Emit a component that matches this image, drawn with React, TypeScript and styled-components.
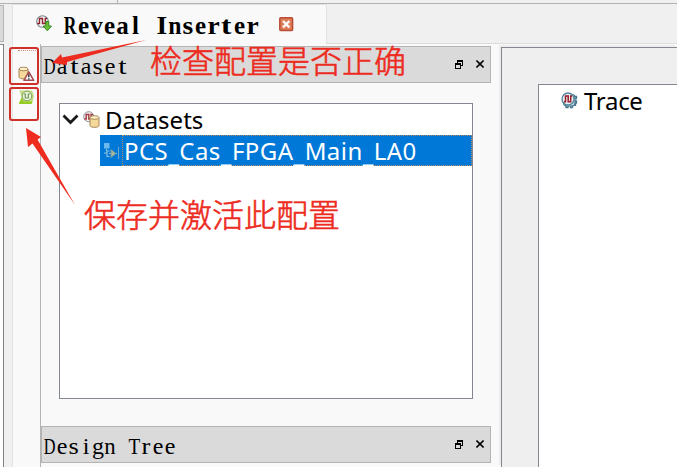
import React from "react";
import styled, { createGlobalStyle } from "styled-components";

const GlobalStyle = createGlobalStyle`
  * { box-sizing: border-box; }
  body { margin: 0; overflow: hidden; background: #f0f0f0; }
`;

const Window = styled.div`
  position: relative;
  width: 677px;
  height: 467px;
  overflow: hidden;
  display: flex;
  flex-direction: column;
  background: #f0f0f0;
  color: #000;
  font-family: "Noto Sans", "Open Sans", sans-serif;
`;

const TopStrip = styled.div`
  height: 4px;
  flex: none;
  border-bottom: 1px solid #b2b2b2;
  display: flex;
`;

const TopStripCell = styled.div`
  width: 118px;
  border-right: 1px solid #b2b2b2;
`;

const Body = styled.div`
  flex: 1;
  display: flex;
  min-height: 0;
`;

const LeftEdge = styled.div`
  width: 12px;
  flex: none;
  display: flex;
  flex-direction: column;
  gap: 2px;
`;

const EdgeTab = styled.div`
  width: 4px;
  height: 37px;
  margin-top: 1px;
  background: #dadada;
  border: 1px solid #b4b4b4;
  border-left: 0;
`;

const EdgePanel = styled.div`
  width: 4px;
  flex: 1;
  background: #fff;
  border-top: 1px solid #828790;
  border-right: 1px solid #828282;
`;

const Workspace = styled.div`
  flex: 1;
  display: flex;
  flex-direction: column;
  min-width: 0;
`;

const TabBar = styled.div`
  height: 40px;
  flex: none;
  display: flex;
  border-bottom: 1px solid #dcdcdc;
`;

const Tab = styled.div`
  width: 315px;
  height: 40px;
  display: flex;
  align-items: flex-start;
  background: #f9f9f9;
  border: 1px solid #e2e2e2;
  border-bottom: 0;
  padding: 10px 0 0 23px;
`;

const TabTitle = styled.div`
  width: 196px;
  margin-left: 10px;
  margin-top: -4px;
`;

const TabClose = styled.div`
  margin: 1px 0 0 18px;
  line-height: 0;
`;

const FixedText = styled.span<{ $size: number; $cell: number; $bold?: boolean }>`
  display: inline-flex;
  white-space: pre;
  font-family: "Liberation Serif", serif;
  font-size: ${(p) => p.$size}px;
  font-weight: ${(p) => (p.$bold ? 700 : 400)};
  line-height: 30px;
`;

const Cell = styled.span<{ $width: number }>`
  width: ${(p) => p.$width}px;
  display: flex;
  justify-content: center;
`;

const Glyph = styled.span<{ $scale: number }>`
  transform: scaleX(${(p) => p.$scale});
`;

const Panes = styled.div`
  flex: 1;
  display: flex;
  min-height: 0;
  background: #f9f9f9;
`;

const ToolBar = styled.div`
  width: 29px;
  flex: none;
  border-left: 1px solid #e4e4e4;
  border-right: 1px solid #b4b4b4;
  display: flex;
  flex-direction: column;
  align-items: flex-start;
  padding: 6px 0 0 5px;
`;

const Grip = styled.div`
  width: 20px;
  border-top: 1px dotted #d98a86;
`;

const ToolIcon = styled.div<{ $top: number }>`
  margin-top: ${(p) => p.$top}px;
  line-height: 0;
`;

const Docks = styled.div`
  width: 450px;
  flex: none;
  display: flex;
  flex-direction: column;
  padding-top: 2px;
`;

const DockHeader = styled.div`
  height: 37px;
  flex: none;
  display: flex;
  align-items: center;
  background: #dadada;
  border: 1px solid #b4b4b4;
  padding: 3px 6px 0 2px;
`;

const DockButtons = styled.div`
  margin-left: auto;
  margin-top: -3px;
  display: flex;
  gap: 13px;
  line-height: 0;
`;

const TreeBox = styled.div`
  width: 414px;
  height: 296px;
  flex: none;
  margin: 20px 0 27px 18px;
  background: #fff;
  border: 1px solid #828790;
`;

const TreeRow = styled.div`
  height: 31px;
  display: flex;
  align-items: center;
  padding-left: 2px;
`;

const IconSlot = styled.div<{ $left: number }>`
  margin-left: ${(p) => p.$left}px;
  line-height: 0;
`;

const SelectedRow = styled.div`
  height: 31px;
  margin-left: 40px;
  display: flex;
  align-items: center;
  background: #0078d7;
  color: #fff;
`;

const SelectedLabel = styled.div`
  flex: 1;
  height: 31px;
  margin-left: 2px;
  padding-left: 1px;
  display: flex;
  align-items: center;
  border: 1px dotted #b98a5e;
`;

const Label = styled.span<{ $gap?: number; $spacing?: number }>`
  font-size: 24px;
  line-height: 30px;
  white-space: nowrap;
  margin-left: ${(p) => p.$gap ?? 0}px;
  letter-spacing: ${(p) => p.$spacing ?? 0}px;
`;

const Underscore = styled.span`
  line-height: 0;
  vertical-align: -2px;
`;

const TracePane = styled.div`
  flex: 1;
  margin: 3px 0 0 10px;
  background: #efefef;
  border-left: 1px solid #828790;
  border-top: 1px solid #828790;
  box-shadow: -2px -2px 0 #ededed;
  padding: 36px 0 0 36px;
  display: flex;
`;

const TraceList = styled.div`
  flex: 1;
  background: #fff;
  border-left: 1px solid #828790;
  border-top: 1px solid #828790;
  padding: 0 0 0 22px;
`;

const TraceRow = styled.div`
  height: 31px;
  display: flex;
  align-items: center;
`;

const Highlight = styled.div<{ $top: number; $height: number }>`
  position: absolute;
  left: 9px;
  top: ${(p) => p.$top}px;
  width: 30px;
  height: ${(p) => p.$height}px;
  border: 2px solid #cf3129;
  border-radius: 3px;
`;

const Note = styled.div<{ $left: number; $top: number }>`
  position: absolute;
  left: ${(p) => p.$left}px;
  top: ${(p) => p.$top}px;
  color: #ed2b1e;
  font: 300 32px/40px "Noto Sans CJK SC", sans-serif;
  -webkit-text-stroke: 0.6px #ed2b1e;
  white-space: nowrap;
`;

const Arrows = styled.svg`
  position: absolute;
  left: 0;
  top: 0;
`;

const GLYPH_SCALE: Record<string, number> = { D: 0.68, R: 0.7, T: 0.8, n: 0.95, t: 1.25, r: 1.1, s: 1.1, I: 1.1 };

function Fixed({ text, size, cell, bold }: { text: string; size: number; cell: number; bold?: boolean }) {
  return (
    <FixedText $size={size} $cell={cell} $bold={bold}>
      {text.split("").map((c, i) => (
        <Cell key={i} $width={cell}>
          <Glyph $scale={GLYPH_SCALE[c] ?? 1}>{c}</Glyph>
        </Cell>
      ))}
    </FixedText>
  );
}

function RevealIcon() {
  return (
    <svg width="18" height="18" viewBox="0 0 18 18" fill="none">
      <circle cx="6.5" cy="6.5" r="5.8" fill="#f7f5f5" stroke="#75848c" strokeWidth="1.1" />
      <path d="M1.200 8.500H3.500V3.500H6.500V8.500H9.300V3.500H11" stroke="#8d202c" strokeWidth="1.400" />
      <path d="M9.800 6.500H12.800V11H15.500L11.300 15.800L7.200 11H9.800Z" fill="#69bd39" stroke="#35891f" />
    </svg>
  );
}

function CloseBadge() {
  return (
    <svg width="16" height="16" viewBox="0 0 16 16">
      <rect x="1.8" y="1.8" width="12.8" height="12.8" rx="1" fill="#de7e56" stroke="#b74c37" strokeWidth="1.5" />
      <path d="M5 5L11.4 11.4M11.4 5L5 11.4" stroke="#fff" strokeWidth="2.3" />
    </svg>
  );
}

function Cylinder() {
  return (
    <>
      <path d="M1 3V11C1 13.5 10 13.5 10 11V3" fill="#f5d99a" stroke="#9d7c4c" strokeWidth=".9" />
      <ellipse cx="5.5" cy="3" rx="4.5" ry="1.8" fill="#fff0c7" stroke="#9d7c4c" strokeWidth=".9" />
    </>
  );
}

function CheckIcon() {
  return (
    <svg width="17" height="16" viewBox="0 0 17 16">
      <Cylinder />
      <path d="M10.800 5.800L15.700 14.300H5.900Z" fill="#fff" stroke="#a94a4e" strokeWidth="1.500" strokeLinejoin="round" />
      <path d="M10.800 8.300V11.300M10.800 12.300V13.400" stroke="#343e48" strokeWidth="1.500" />
    </svg>
  );
}

function ActivateIcon() {
  return (
    <svg width="17" height="15" viewBox="0 0 17 15" fill="none">
      <path d="M1.500 .5H14L16 6L14 13.500H1L3.500 7Z" fill="#c3dc86" />
      <path d="M1 13.500L3.500 8L6 11.500H14.500L13.500 14H1Z" fill="#96cc22" />
      <circle cx="9" cy="6" r="4.800" fill="#eef4dc" stroke="#79a653" />
      <path d="M5.800 4H7.300V8H10.300V4H12" stroke="#6c9a5c" strokeWidth="1.200" />
    </svg>
  );
}

function DatasetsIcon() {
  return (
    <svg width="17" height="17" viewBox="0 0 17 17" fill="none">
      <circle cx="5.7" cy="5.7" r="5" fill="#f6efef" stroke="#8b9298" />
      <path d="M1.500 8H3.200V3.500H5.800V8H8V3.500H10" stroke="#a53842" strokeWidth="1.400" />
      <g transform="translate(6 3.5)">
        <Cylinder />
      </g>
    </svg>
  );
}

function CoreIcon() {
  return (
    <svg width="17" height="16" viewBox="0 0 17 16" fill="none">
      <rect x="1" y="0" width="5.5" height="5.5" fill="#6bb8ec" />
      <path d="M3.500 6V8M1 10H4M3.500 8H6.500M3.500 13.500H6.500M4 8V14M6 10.500H14" stroke="#8bc1df" strokeWidth="1.200" />
      <path d="M8 6.500L13 10.500L8 14.500Z" fill="#a8b89d" stroke="#6d99a4" />
      <path d="M15.500 4V16" stroke="#6fa8d1" />
    </svg>
  );
}

function TraceIcon() {
  return (
    <svg width="17" height="17" viewBox="0 0 17 17" fill="none">
      <path d="M5 13V15.500H7V13.500M9.500 13.500V15.500H11.500V13M13 4.500H15.500V6.500H14M14 9H15.500V11H14M12 12.500H14.500V14" stroke="#47788e" strokeWidth="1.300" />
      <rect x="2.500" y="2.500" width="11.500" height="11.500" rx="3" fill="#c3dce5" stroke="#47788e" strokeWidth="1.200" />
      <circle cx="7" cy="7" r="6" fill="#e8eef1" stroke="#54849a" strokeWidth="1.300" />
      <path d="M3 9.800H4.500V4H7.200V9.800H9.700V4H11" stroke="#991d2b" strokeWidth="1.500" />
    </svg>
  );
}

function HeaderButtons() {
  return (
    <DockButtons>
      <svg width="8" height="9" viewBox="0 0 8 9" fill="none" shapeRendering="crispEdges">
        <path d="M2 0H8V2H2ZM2 2H3V3H2ZM7 2H8V6H6V5H7ZM0 3H6V5H0ZM0 5H1V9H0ZM5 5H6V9H5ZM1 8H5V9H1Z" fill="#000" />
      </svg>
      <svg width="8" height="8" viewBox="0 0 8 8" fill="none">
        <path d="M.4 .5L7.6 7.5M7.6 .5L.4 7.5" stroke="#000" strokeWidth="1.6" />
      </svg>
    </DockButtons>
  );
}

export default function App() {
  return (
    <Window>
      <GlobalStyle />
      <TopStrip>
        <TopStripCell />
      </TopStrip>
      <Body>
        <LeftEdge>
          <EdgeTab />
          <EdgePanel />
        </LeftEdge>
        <Workspace>
          <TabBar>
            <Tab>
              <RevealIcon />
              <TabTitle>
                <Fixed text="Reveal Inserter" size={25} cell={13} bold />
              </TabTitle>
              <TabClose>
                <CloseBadge />
              </TabClose>
            </Tab>
          </TabBar>
          <Panes>
            <ToolBar>
              <Grip />
              <ToolIcon $top={15}>
                <CheckIcon />
              </ToolIcon>
              <ToolIcon $top={8}>
                <ActivateIcon />
              </ToolIcon>
            </ToolBar>
            <Docks>
              <DockHeader>
                <Fixed text="Dataset" size={24} cell={12} />
                <HeaderButtons />
              </DockHeader>
              <TreeBox>
                <TreeRow>
                  <svg width="17" height="11" viewBox="0 0 17 11" fill="none">
                    <path d="M1.5 1.5L8.5 8.5L15.5 1.5" stroke="#1a1a1a" strokeWidth="2.8" />
                  </svg>
                  <IconSlot $left={4}>
                    <DatasetsIcon />
                  </IconSlot>
                  <Label $gap={5}>Datasets</Label>
                </TreeRow>
                <SelectedRow>
                  <IconSlot $left={3}>
                    <CoreIcon />
                  </IconSlot>
                  <SelectedLabel>
                    <Label $spacing={0.45}>
                      PCS<Underscore>_</Underscore>Cas<Underscore>_</Underscore>FPGA<Underscore>_</Underscore>Main
                      <Underscore>_</Underscore>LA0
                    </Label>
                  </SelectedLabel>
                </SelectedRow>
              </TreeBox>
              <DockHeader>
                <Fixed text="Design Tree" size={24} cell={12} />
                <HeaderButtons />
              </DockHeader>
            </Docks>
            <TracePane>
              <TraceList>
                <TraceRow>
                  <TraceIcon />
                  <Label $gap={6} $spacing={-0.3}>Trace</Label>
                </TraceRow>
              </TraceList>
            </TracePane>
          </Panes>
        </Workspace>
      </Body>
      <Highlight $top={47} $height={38} />
      <Highlight $top={87} $height={34} />
      <Arrows width="677" height="467" viewBox="0 0 677 467" fill="#ed2b1e">
        <path d="M52 63L61 54L62 57.500L146 40L67 62L67 65Z" />
        <path d="M26 128L41 137L37.500 139.500L75 205L32.500 143.500L28 147Z" />
      </Arrows>
      <Note $left={150} $top={39}>检查配置是否正确</Note>
      <Note $left={84} $top={193}>保存并激活此配置</Note>
    </Window>
  );
}
